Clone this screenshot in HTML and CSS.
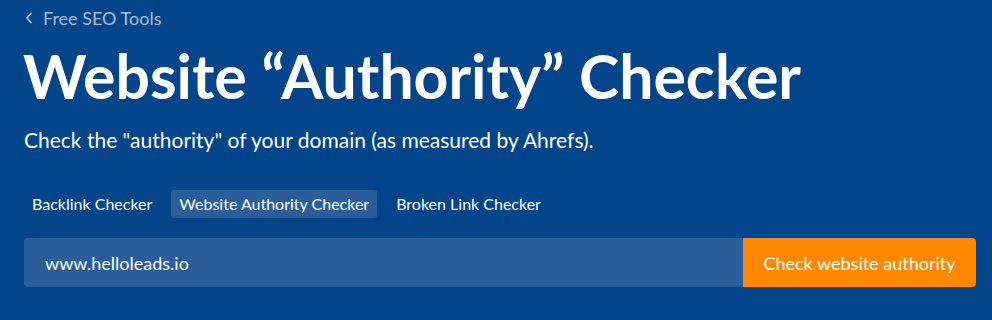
FILE: index.html
```html
<!DOCTYPE html>
<html lang="en">
<head>
<meta charset="utf-8">
<title>Website Authority Checker</title>
<link rel="stylesheet" href="styles.css">
</head>
<body>
<div class="page">
  <a class="crumb" href="#">
    <svg class="chev" width="8" height="12" viewBox="0 0 8 12"><path d="M6 1.5 L2 6 L6 10.5" fill="none" stroke="currentColor" stroke-width="1.8" stroke-linecap="round" stroke-linejoin="round"/></svg>
    <span>Free SEO Tools</span>
  </a>
  <h1 class="title">Website “Authority” Checker</h1>
  <p class="sub">Check the "authority" of your domain (as measured by Ahrefs).</p>
  <nav class="tabs">
    <a class="tab" href="#">Backlink Checker</a>
    <a class="tab active" href="#">Website Authority Checker</a>
    <a class="tab" href="#">Broken Link Checker</a>
  </nav>
  <form class="search">
    <div class="field">www.helloleads.io</div>
    <button class="btn" type="button">Check website authority</button>
  </form>
</div>
</body>
</html>
```
FILE: styles.css
```css
html, body {
  margin: 0;
  padding: 0;
  background: #03458a;
  height: 100%;
}
body {
  font-family: Lato, "Open Sans", sans-serif;
  color: #ffffff;
}
.page {
  padding: 6px 16px 0 24px;
}
.crumb {
  display: flex;
  align-items: center;
  gap: 10px;
  color: #a9bdd8;
  text-decoration: none;
  font-size: 18px;
  line-height: 24px;
  height: 24px;
}
.chev {
  display: block;
  margin-left: 1px;
}
.title {
  margin: 9px 0 0 -1px;
  font-size: 60.7px;
  line-height: 74px;
  font-weight: 700;
  letter-spacing: 0;
}
.sub {
  margin: 13px 0 0 0;
  font-size: 21px;
  line-height: 28px;
  font-weight: 400;
}
.tabs {
  display: flex;
  gap: 11px;
  margin-top: 36px;
}
.tab {
  display: block;
  padding: 0 8px;
  height: 28px;
  line-height: 27px;
  font-size: 16px;
  color: #ffffff;
  text-decoration: none;
  border-radius: 3px;
}
.tab.active {
  background: #2a5e9b;
}
.search {
  display: flex;
  margin-top: 20px;
  height: 49px;
}
.field {
  flex: 1;
  display: flex;
  align-items: center;
  padding-left: 21px;
  background: #2a5e9b;
  font-size: 18px;
  border-radius: 4px 0 0 4px;
}
.btn {
  width: 233px;
  border: 0;
  margin: 0;
  background: #ff8800;
  color: #ffffff;
  font-family: Lato, "Open Sans", sans-serif;
  font-size: 18px;
  border-radius: 0 4px 4px 0;
  cursor: pointer;
}
```
